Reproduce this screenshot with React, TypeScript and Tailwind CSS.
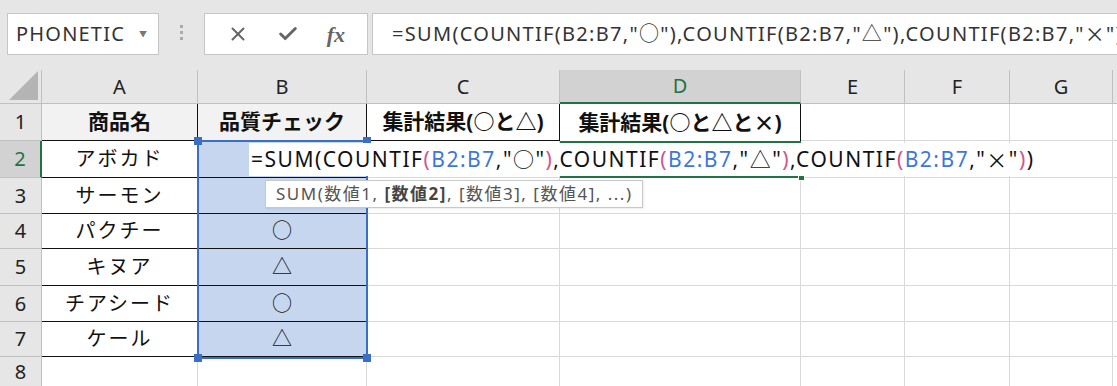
import { X, Check } from "lucide-react";

const COLS = ["A", "B", "C", "D", "E", "F", "G"];

const NAMES = ["アボカド", "サーモン", "パクチー", "キヌア", "チアシード", "ケール"];
const MARKS = ["", "", "○", "△", "○", "△"];

const BLUE = "text-[#3d78d6]";
const PINK = "text-[#cf5590]";

function Cell({
  children,
  className = "",
}: {
  children?: React.ReactNode;
  className?: string;
}) {
  return (
    <div className={`flex items-center justify-center border-r border-b text-[20px] text-[#111] ${className}`}>
      {children}
    </div>
  );
}

function Ref() {
  return <span className={BLUE}>B2:B7</span>;
}

function Cross() {
  return <span className="font-['Noto_Sans_CJK_JP',sans-serif]">×</span>;
}

export default function App() {
  const gray = "border-[#d9d9d9]";
  const black = "border-[#111]";

  return (
    <div className="relative w-[1117px] h-[386px] overflow-hidden bg-white font-['Noto_Sans','Noto_Sans_CJK_JP',sans-serif]">
      {/* formula bar */}
      <div className="flex h-[70px] items-start bg-[#e6e6e6] pt-[13px]">
        <div className="ml-[7px] flex h-[42px] w-[152px] items-center justify-between border border-[#c6c6c6] bg-white pl-[8px] pr-[11px]">
          <span className="text-[20px] tracking-[1.2px] text-[#333]">PHONETIC</span>
          <span className="text-[8px] text-[#777]">▼</span>
        </div>
        <div className="flex w-[45px] flex-col items-center gap-[3px] pt-[12px]">
          <div className="h-[3px] w-[3px] bg-[#aaa]" />
          <div className="h-[3px] w-[3px] bg-[#aaa]" />
          <div className="h-[3px] w-[3px] bg-[#aaa]" />
        </div>
        <div className="flex h-[42px] w-[164px] items-center justify-around border border-[#c6c6c6] bg-white px-[8px]">
          <X size={22} strokeWidth={2.2} className="text-[#666]" />
          <Check size={22} strokeWidth={3.2} className="text-[#666]" />
          <span className="font-['Liberation_Serif',serif] text-[22px] italic font-bold text-[#666]">fx</span>
        </div>
        <div className="ml-[4px] flex h-[42px] min-w-0 flex-1 items-center overflow-hidden whitespace-nowrap border-y border-l border-[#c6c6c6] bg-white pl-[19px] text-[20px] tracking-[1.3px] text-[#333]">
          =SUM(COUNTIF(B2:B7,"○"),COUNTIF(B2:B7,"△"),COUNTIF(B2:B7,"<Cross />"))
        </div>
      </div>

      {/* sheet */}
      <div className="grid grid-cols-[42px_156px_169px_193px_241px_104px_105px_103px_4px] grid-rows-[34px_37px_37px_36px_35px_37px_36px_35px_29px]">
        {/* column headers */}
        <div className="relative border-r border-b border-[#c0c0c0] bg-[#e6e6e6]">
          <div className="absolute bottom-[3px] right-[3px] h-0 w-0 border-b-[29px] border-l-[29px] border-b-[#b4b4b4] border-l-transparent" />
        </div>
        {COLS.map((c) =>
          c === "D" ? (
            <div
              key={c}
              className="flex items-center justify-center border-r border-b-2 border-r-[#c0c0c0] border-b-[#217346] bg-[#d2d2d2] text-[20px] text-[#217346]"
            >
              {c}
            </div>
          ) : (
            <div
              key={c}
              className="flex items-center justify-center border-r border-b border-[#c0c0c0] bg-[#e6e6e6] text-[20px] text-[#222]"
            >
              {c}
            </div>
          )
        )}
        <div className="border-b border-[#c0c0c0] bg-[#e6e6e6]" />

        {/* row 1 */}
        <div className="flex items-center justify-center border-r border-b border-[#c0c0c0] bg-[#e6e6e6] text-[20px] text-[#222]">1</div>
        <Cell className={`${black} bg-[#f2f2f2] text-[21px] font-bold`}>商品名</Cell>
        <Cell className={`${black} bg-[#f2f2f2] text-[21px] font-bold`}>品質チェック</Cell>
        <Cell className={`${black} text-[21px] font-bold`}>集計結果(○と△)</Cell>
        <Cell className={`${black} border-b-0 text-[21px] font-bold`}>
          集計結果(○と△と<Cross />)
        </Cell>
        <Cell className={gray} />
        <Cell className={gray} />
        <Cell className={gray} />
        <div className={`border-b ${gray}`} />

        {/* rows 2-8 */}
        {NAMES.map((name, i) => {
          const row = i + 2;
          const active = row === 2;
          return [
            active ? (
              <div
                key={`h${row}`}
                className="flex items-center justify-center border-r-2 border-b border-r-[#217346] border-b-[#c0c0c0] bg-[#d2d2d2] text-[20px] text-[#217346]"
              >
                {row}
              </div>
            ) : (
              <div
                key={`h${row}`}
                className="flex items-center justify-center border-r border-b border-[#c0c0c0] bg-[#e6e6e6] text-[20px] text-[#222]"
              >
                {row}
              </div>
            ),
            <Cell key={`a${row}`} className={`${black} tracking-[2px]`}>{name}</Cell>,
            <Cell key={`b${row}`} className={`${black} bg-[#c6d6ef]`}>{MARKS[i]}</Cell>,
            <Cell key={`c${row}`} className={gray} />,
            active ? (
              <div key={`d${row}`} className="relative border-y-2 border-[#217346]">
                <div className="absolute -bottom-[5px] -right-[4px] h-[7px] w-[7px] border border-white bg-[#217346]" />
              </div>
            ) : (
              <Cell key={`d${row}`} className={gray} />
            ),
            <Cell key={`e${row}`} className={gray} />,
            <Cell key={`f${row}`} className={gray} />,
            <Cell key={`g${row}`} className={gray} />,
            <div key={`x${row}`} className={`border-b ${gray}`} />,
          ];
        })}
        <div className="flex items-center justify-center border-r border-[#c0c0c0] bg-[#e6e6e6] text-[20px] text-[#222]">8</div>
        <Cell className="border-b-0 border-[#d9d9d9]" />
        <Cell className="border-b-0 border-[#d9d9d9]" />
        <Cell className="border-b-0 border-[#d9d9d9]" />
        <Cell className="border-b-0 border-[#d9d9d9]" />
        <Cell className="border-b-0 border-[#d9d9d9]" />
        <Cell className="border-b-0 border-[#d9d9d9]" />
        <Cell className="border-b-0 border-[#d9d9d9]" />
        <div />
      </div>

      {/* referenced range B2:B7 */}
      <div className="pointer-events-none absolute left-[197px] top-[140px] h-[219px] w-[171px] border-2 border-[#3b6fc6]">
        <div className="absolute -left-[5px] -top-[5px] h-[8px] w-[8px] bg-[#3b6fc6]" />
        <div className="absolute -right-[5px] -top-[5px] h-[8px] w-[8px] bg-[#3b6fc6]" />
        <div className="absolute -bottom-[5px] -left-[5px] h-[8px] w-[8px] bg-[#3b6fc6]" />
        <div className="absolute -bottom-[5px] -right-[5px] h-[8px] w-[8px] bg-[#3b6fc6]" />
      </div>

      {/* in-cell editor */}
      <div className="absolute left-[249px] top-[143px] flex h-[33px] w-[792px] items-center whitespace-nowrap bg-white pl-[2px] text-[21px] tracking-[1.5px] text-[#111]">
        =SUM(COUNTIF<span className={PINK}>(</span>
        <Ref />,"○"<span className={PINK}>)</span>,COUNTIF<span className={PINK}>(</span>
        <Ref />,"△"<span className={PINK}>)</span>,COUNTIF<span className={PINK}>(</span>
        <Ref />,"<Cross />"<span className={PINK}>)</span>)
      </div>

      {/* function tooltip */}
      <div className="absolute left-[265px] top-[180px] flex h-[28px] items-center whitespace-nowrap border border-[#c8c8c8] bg-white pl-[10px] pr-[10px] text-[17px] tracking-[1.5px] text-[#555] shadow-[1px_1px_2px_rgba(0,0,0,0.08)]">
        SUM(数値1,&nbsp;<b className="text-[#444]">[数値2]</b>, [数値3], [数値4], ...)
      </div>
    </div>
  );
}
